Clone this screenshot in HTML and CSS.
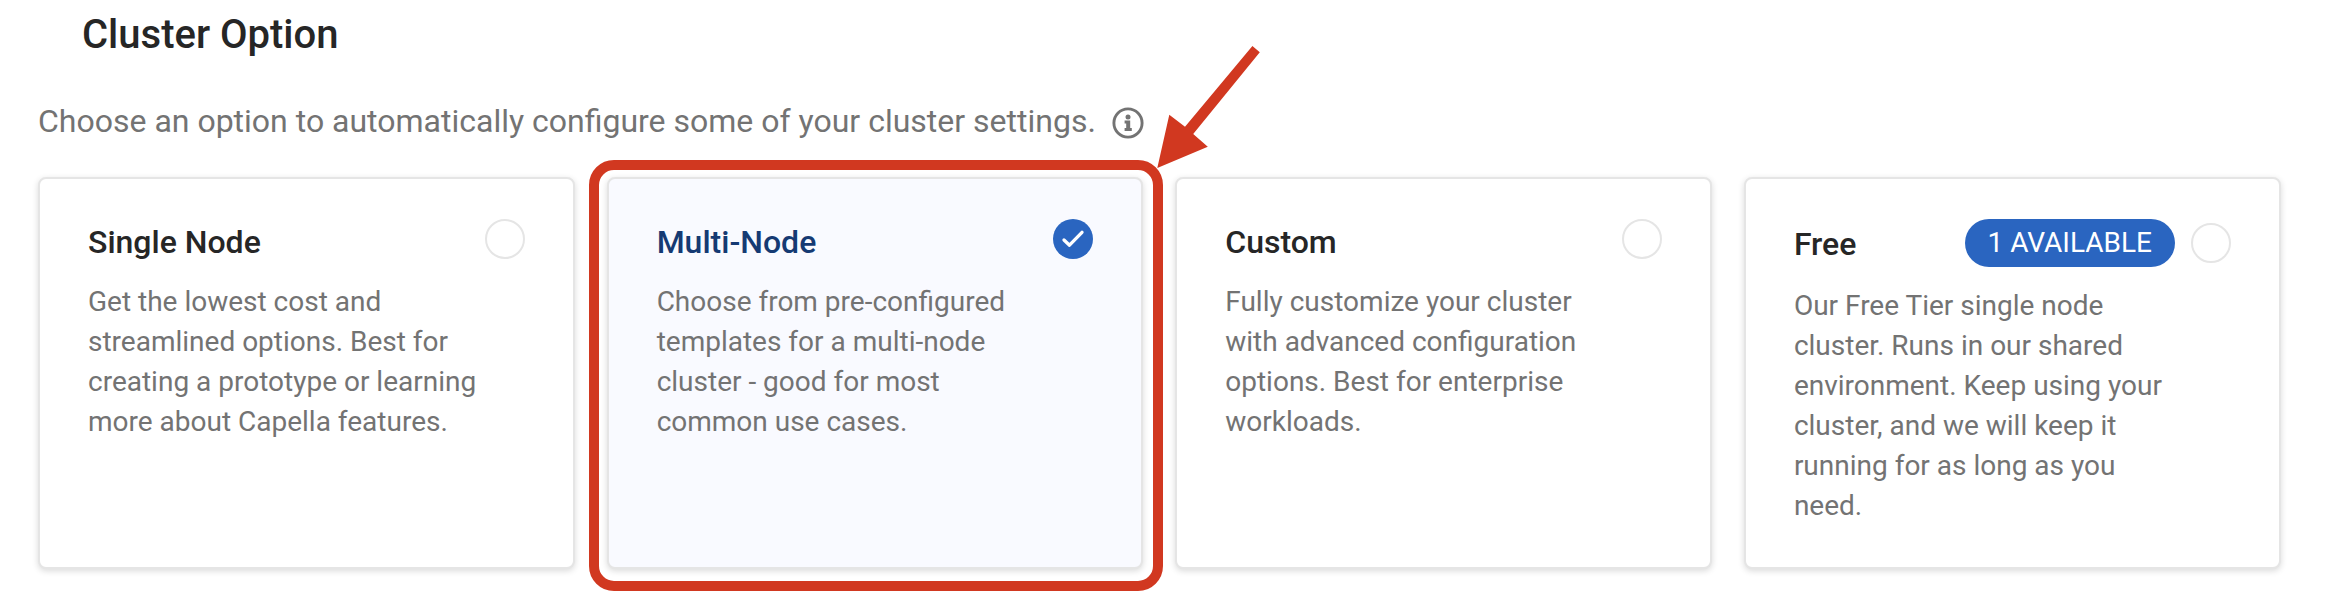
FILE: index.html
```
<!DOCTYPE html>
<html lang="en">
<head>
<meta charset="utf-8">
<title>Cluster Option</title>
<link rel="stylesheet" href="styles.css">
</head>
<body>
<main class="page">
  <h1 class="heading">Cluster Option</h1>
  <div class="intro">
    <p class="intro-text">Choose an option to automatically configure some of your cluster settings.</p>
    <svg class="info" viewBox="0 0 32 32" aria-hidden="true">
      <circle cx="16" cy="16" r="14.1" fill="none" stroke="currentColor" stroke-width="2.9"/>
      <circle cx="16" cy="9.9" r="2.5" fill="currentColor"/>
      <path fill="currentColor" d="M12.6 13.6h5.6v7.4h1.6v2.9h-7.2V21h1.6v-4.4h-1.6z"/>
    </svg>
  </div>
  <section class="options">
    <article class="card">
      <header class="card-head"><h2 class="card-title">Single Node</h2><span class="radio"></span></header>
      <p class="card-text">Get the lowest cost and<br>streamlined options. Best for<br>creating a prototype or learning<br>more about Capella features.</p>
    </article>
    <article class="card card-selected">
      <header class="card-head"><h2 class="card-title">Multi-Node</h2>
        <span class="radio radio-checked"><svg class="check" viewBox="0 0 40 40" aria-hidden="true"><path d="M11 21l5.5 5.2L29 13.3" fill="none" stroke="#fff" stroke-width="3.3" stroke-linecap="round" stroke-linejoin="round"/></svg></span>
      </header>
      <p class="card-text">Choose from pre-configured<br>templates for a multi-node<br>cluster - good for most<br>common use cases.</p>
      <div class="highlight"></div>
    </article>
    <article class="card">
      <header class="card-head"><h2 class="card-title">Custom</h2><span class="radio"></span></header>
      <p class="card-text">Fully customize your cluster<br>with advanced configuration<br>options. Best for enterprise<br>workloads.</p>
    </article>
    <article class="card">
      <header class="card-head card-head-badge"><h2 class="card-title">Free</h2><span class="badge">1 AVAILABLE</span><span class="radio"></span></header>
      <p class="card-text">Our Free Tier single node<br>cluster. Runs in our shared<br>environment. Keep using your<br>cluster, and we will keep it<br>running for as long as you<br>need.</p>
    </article>
  </section>
  <svg class="arrow" viewBox="1150 40 120 135" aria-hidden="true">
    <path fill="#d13820" d="M1252.4 46L1259.8 52.3L1193.2 134L1207.8 146.7L1157.3 168L1169.3 114.7L1185 126.7Z"/>
  </svg>
</main>
</body>
</html>
```
FILE: styles.css
```
* { box-sizing: border-box; }
body { margin: 0; background: #fff; font-family: Roboto, sans-serif; color: #262626; }
.page { position: relative; height: 602px; padding: 11px 71.5px 0 38px; overflow: hidden; }
.heading { margin: 0 0 0 44px; font-size: 40px; line-height: 48px; font-weight: 500; }
.intro { display: flex; align-items: center; gap: 16px; height: 40px; margin-top: 42px; color: #737373; }
.intro-text { margin: 0; font-size: 32px; line-height: 40px; white-space: nowrap; }
.info { width: 32px; height: 32px; margin-top: 4px; }
.options { display: grid; grid-template-columns: repeat(4, 1fr); gap: 32px; height: 392px; margin-top: 36px; }
.card { position: relative; padding: 40px 48px; border: 2px solid #e5e5e5; border-radius: 8px; background: #fff; box-shadow: 0 2px 6px rgba(0, 0, 0, .15); }
.card-selected { background: #f9faff; }
.card-head { display: flex; justify-content: space-between; align-items: flex-start; height: 48px; }
.card-head-badge { align-items: center; }
.card-title { margin: 3px 0 0; font-size: 32px; line-height: 40px; font-weight: 500; white-space: nowrap; }
.card-head-badge .card-title { margin-top: 2px; }
.card-selected .card-title { color: #153a73; }
.radio { flex: none; width: 40px; height: 40px; border: 2px solid #e5e5e5; border-radius: 50%; background: #fff; }
.radio-checked { border: 0; background: #2a65c0; }
.check { display: block; width: 40px; height: 40px; }
.badge { height: 48px; margin: 0 16px 0 auto; padding: 0 22.5px; border-radius: 24px; background: #2a65c0; color: #fff; font-size: 28px; line-height: 47px; white-space: nowrap; }
.card-text { margin: 15px 0 0; color: #737373; font-size: 28px; line-height: 40px; white-space: nowrap; }
.card-head-badge + .card-text { margin-top: 19px; }
.highlight { position: absolute; inset: -19px -22px -24px -20px; border: 10px solid #d13820; border-radius: 25px; }
.arrow { position: absolute; left: 1150px; top: 40px; width: 120px; height: 135px; }
```
